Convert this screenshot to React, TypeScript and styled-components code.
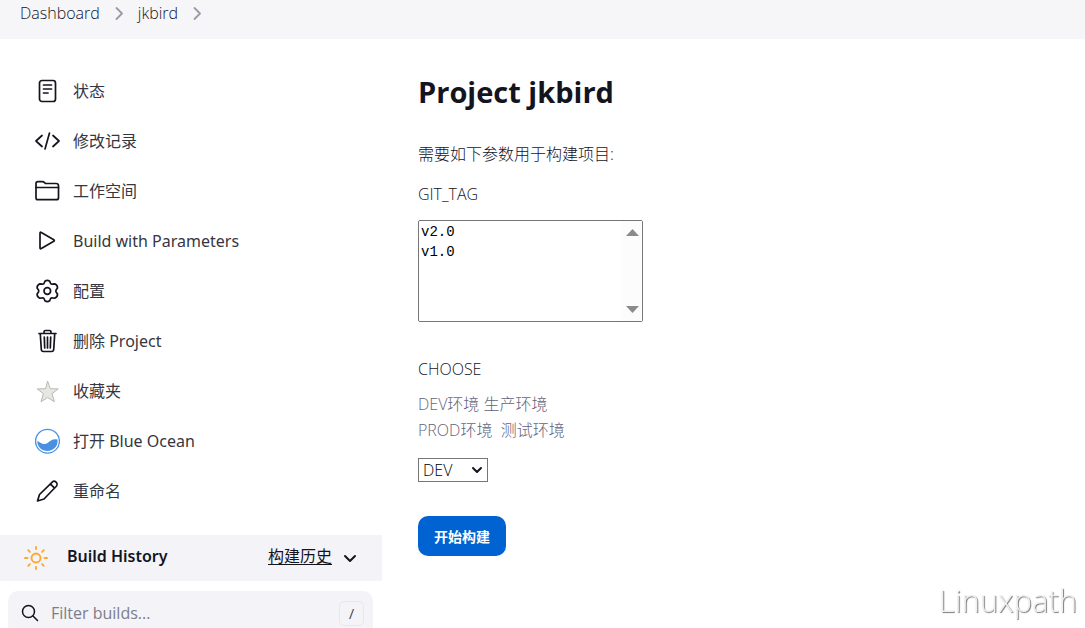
import React from 'react';
import styled, { createGlobalStyle } from 'styled-components';

const latin = '"Open Sans", "Noto Sans CJK SC", sans-serif';
const wideLatin = '"Noto Sans", "Noto Sans CJK SC", sans-serif';

const GlobalStyle = createGlobalStyle`
  *, *::before, *::after { box-sizing: border-box; }
  body {
    margin: 0;
    background: #fff;
    color: #14141f;
    font-family: ${latin};
    font-size: 16px;
    font-weight: 300;
    line-height: 26px;
  }
`;

const Breadcrumbs = styled.nav`
  display: flex;
  align-items: center;
  gap: 11px;
  height: 39px;
  padding: 0 20px 13px;
  background: #f6f6f9;

  a { color: #14141f; text-decoration: none; }
`;

const Columns = styled.div`
  display: flex;
  align-items: flex-start;
`;

const Sidebar = styled.aside`
  flex: 0 0 382px;
  padding-top: 27px;
`;

const Tasks = styled.ul`
  list-style: none;
  margin: 0;
  padding: 0;
`;

const TaskLink = styled.a`
  display: flex;
  align-items: center;
  gap: 13px;
  height: 50px;
  padding-left: 34px;
  color: inherit;
  font-family: ${wideLatin};
  font-weight: 400;
  text-decoration: none;
`;

const TaskLabel = styled.span`
  color: #363641;
`;

const Icon = styled.svg<{ $tone?: string }>`
  display: block;
  flex: none;
  fill: none;
  stroke: ${({ $tone }) => $tone ?? 'currentColor'};
  stroke-linecap: round;
  stroke-linejoin: round;
`;

const HistoryBar = styled.header`
  display: flex;
  align-items: center;
  height: 46px;
  margin-top: 19px;
  padding: 0 24px;
  background: #f3f3f8;
`;

const HistoryTitle = styled.h2`
  flex: 1;
  margin: 0 0 0 19px;
  padding-bottom: 4px;
  font-family: ${wideLatin};
  font-size: 16px;
  font-weight: 600;
  line-height: 26px;
`;

const TrendLink = styled.a`
  margin-right: 10px;
  padding-bottom: 4px;
  color: inherit;
  font-weight: 400;
  text-underline-offset: 2px;
`;

const FilterBox = styled.label`
  display: flex;
  align-items: center;
  gap: 12px;
  height: 44px;
  margin: 10px 9px 0 8px;
  padding: 0 9px 0 13px;
  border-radius: 10px;
  background: #f3f3f8;
`;

const FilterInput = styled.input`
  flex: 1;
  min-width: 0;
  padding: 0;
  border: 0;
  outline: 0;
  background: transparent;
  color: inherit;
  font: inherit;
  font-weight: 400;

  &::placeholder { color: #7d7d8a; opacity: 1; }
`;

const Shortcut = styled.kbd`
  width: 25px;
  height: 25px;
  border: 1px solid #e7e7ee;
  border-radius: 5px;
  color: #40404b;
  font-family: inherit;
  font-size: 14px;
  font-weight: 400;
  line-height: 24px;
  text-align: center;
`;

const Main = styled.main`
  flex: 1;
  min-width: 0;
  padding: 33px 36px 40px;
`;

const Title = styled.h1`
  margin: 0 0 29px;
  font-size: 29px;
  font-weight: 700;
  line-height: 40px;
`;

const Intro = styled.p`
  margin: 0 0 14px;
`;

const FieldLabel = styled.label`
  display: block;
  margin-bottom: 13px;
`;

const ListFrame = styled.div`
  display: flex;
  width: 225px;
  height: 102px;
  margin-bottom: 34px;
  border: 1px solid #767676;
  border-radius: 2px;
`;

const TagList = styled.select`
  flex: 1;
  min-width: 0;
  padding: 1px 0 0;
  border: 0;
  outline: 0;
  background: #fff;
  color: #000;
  font-family: "Liberation Mono", monospace;
  font-size: 14px;
  overflow: hidden;

  option {
    height: 20px;
    min-height: 20px;
    padding: 2px;
    line-height: 16px;
  }
`;

const ScrollTrack = styled.div`
  display: flex;
  flex-direction: column;
  justify-content: space-between;
  align-items: center;
  width: 20px;
  padding: 8px 0;
  background: #fcfcfc;
`;

const Description = styled.div`
  margin: -4px 0 15px;
  color: #63637a;
  white-space: pre-wrap;
`;

const ChoiceFrame = styled.div`
  display: grid;
  align-items: center;
  width: 70px;
  height: 24px;
  margin-bottom: 34px;
  border: 1px solid #767676;

  > * { grid-area: 1 / 1; }
  > svg { justify-self: end; margin-right: 4px; pointer-events: none; }
`;

const ChoiceSelect = styled.select`
  appearance: none;
  width: 100%;
  height: 22px;
  padding: 0 4px;
  border: 0;
  background: transparent;
  color: #000;
  font: inherit;
  line-height: 22px;
`;

const SubmitButton = styled.button`
  display: block;
  width: 88px;
  height: 40px;
  padding: 0;
  border: 0;
  border-radius: 10px;
  background: #0063d1;
  color: #fff;
  font-family: inherit;
  font-size: 14px;
  font-weight: 700;
`;

const Watermark = styled.div`
  position: fixed;
  right: 8px;
  bottom: 8px;
  color: #f0f0f0;
  font-size: 31px;
  line-height: 40px;
  text-shadow: 1px 1px 1px #777;
  pointer-events: none;
`;

const Separator = () => (
  <Icon width="16" height="16" viewBox="0 0 16 16" $tone="#9a9aa6" strokeWidth="1.800">
    <path d="M5.500 3l5.500 5.500-5.500 5.500" />
  </Icon>
);

const TaskIcon = ({ children }: { children: React.ReactNode }) => (
  <Icon width="26" height="26" viewBox="0 0 26 26" strokeWidth="1.7">{children}</Icon>
);

const tasks: { label: string; icon: React.ReactNode }[] = [
  {
    label: '状态',
    icon: <><rect x="5.500" y="2.500" width="16" height="21" rx="2.5" /><path d="M9.500 7h8M9.500 11h8M9.500 15h4.5" /></>,
  },
  {
    label: '修改记录',
    icon: <path d="M8 7.5L2 13l6 5.5M19 7.500l6 5.5-6 5.5M15.500 5l-4.500 16" />,
  },
  {
    label: '工作空间',
    icon: <><path d="M2 20v-14.500Q2 3.700 4 3.700h4.500q1 0 2 1l1 .8H22q2.500 0 2.500 2.200v12q0 2-2 2H4q-2 0-2-1.700z" /><path d="M2 9.500h22.500" /></>,
  },
  {
    label: 'Build with Parameters',
    icon: <path d="M6 5.200v14.600q0 1.500 1.300.7l12.500-7.200q1-.8 0-1.600L7.300 4.500q-1.300-.8-1.300.7z" />,
  },
  {
    label: '配置',
    icon: (
      <>
        <circle cx="13.300" cy="13" r="3.300" />
        <path d="M10.900 3.300Q13.300 1.500 15.700 3.300L16.600 5.500Q17.300 6.300 18.500 6.100L20.800 5.800Q23.700 7.200 23.500 10L22.100 12Q21.600 13 22.100 14L23.500 16Q23.700 18.800 20.800 20.200L18.500 19.900Q17.300 19.700 16.600 20.500L15.700 22.700Q13.300 24.500 10.900 22.700L10 20.500Q9.300 19.700 8.100 19.900L5.800 20.200Q2.900 18.800 3.100 16L4.500 14Q5 13 4.500 12L3.100 10Q2.900 7.200 5.800 5.800L8.100 6.100Q9.300 6.300 10 5.500Z" />
      </>
    ),
  },
  {
    label: '删除 Project',
    icon: <path d="M5 5.500h17M10 5.500V4q0-1.500 1.500-1.500h4q1.500 0 1.500 1.500v1.500M6.300 6l1 15.500q.2 2 2 2h8.400q1.800 0 2-2L20.700 6M10.300 9l.4 11M13.500 9V20M16.700 9L16.300 20" />,
  },
  {
    label: '收藏夹',
    icon: <path d="M13.700 3.500l2.600 7.200 8 .2-6.300 4.800 2.400 8-6.700-4.200L7 23.700l2.400-8L3.200 10.900l8-.2z" fill="#e6e6e4" stroke="#b9b9b6" strokeWidth="1" />,
  },
  {
    label: '打开 Blue Ocean',
    icon: (
      <>
        <circle cx="13.500" cy="13.200" r="11.900" stroke="#4a90e2" strokeWidth="1.300" />
        <path d="M3.300 13C7 14.500 8 17 12 15.800 16 14.500 17 10 23.500 11.600 24.300 18.500 19.500 23 13.500 23 8 23 3 19 3.300 13z" fill="#4a90e2" stroke="none" />
      </>
    ),
  },
  {
    label: '重命名',
    icon: <path d="M3.500 23l2-6.500L18.500 3.800q1.500-1.200 3.200 0l.9.900q1.300 1.500 0 3.300L10 21zM16.300 5.800l4.300 4.300" />,
  },
];

export default function App() {
  return (
    <>
      <GlobalStyle />
      <Breadcrumbs aria-label="Breadcrumb">
        <a href="#dashboard">Dashboard</a>
        <Separator />
        <a href="#jkbird">jkbird</a>
        <Separator />
      </Breadcrumbs>
      <Columns>
        <Sidebar>
          <Tasks>
            {tasks.map((task) => (
              <li key={task.label}>
                <TaskLink href="#task">
                  <TaskIcon>{task.icon}</TaskIcon>
                  <TaskLabel>{task.label}</TaskLabel>
                </TaskLink>
              </li>
            ))}
          </Tasks>
          <HistoryBar>
            <Icon width="24" height="24" viewBox="0 0 24 24" $tone="#fea82f" strokeWidth="1.900">
              <circle cx="12" cy="12" r="4.500" />
              <path d="M12 1v2M12 21v2M1 12h2.500M20.500 12H23M4.200 4.200l1.700 1.700M18.100 18.100l1.700 1.700M4.200 19.800l1.700-1.700M18.100 5.900l1.700-1.700" />
            </Icon>
            <HistoryTitle>Build History</HistoryTitle>
            <TrendLink href="#trend">构建历史</TrendLink>
            <Icon width="16" height="16" viewBox="0 0 16 16" strokeWidth="2">
              <path d="M3 6l5 5 5-5" />
            </Icon>
          </HistoryBar>
          <FilterBox>
            <Icon width="18" height="18" viewBox="0 0 18 18" strokeWidth="1.500">
              <circle cx="7.500" cy="7.500" r="6" />
              <path d="M12 12l4.500 4.500" />
            </Icon>
            <FilterInput type="text" placeholder="Filter builds..." aria-label="Filter builds" />
            <Shortcut>/</Shortcut>
          </FilterBox>
        </Sidebar>
        <Main>
          <Title>Project jkbird</Title>
          <Intro>需要如下参数用于构建项目:</Intro>
          <FieldLabel htmlFor="git-tag">GIT_TAG</FieldLabel>
          <ListFrame>
            <TagList id="git-tag" size={5}>
              <option>v2.0</option>
              <option>v1.0</option>
            </TagList>
            <ScrollTrack aria-hidden="true">
              <svg width="13" height="7" viewBox="0 0 13 7"><path d="M6.500 0L13 7H0z" fill="#8b8b8b" /></svg>
              <svg width="13" height="7" viewBox="0 0 13 7"><path d="M6.500 7L13 0H0z" fill="#8b8b8b" /></svg>
            </ScrollTrack>
          </ListFrame>
          <FieldLabel htmlFor="choose">CHOOSE</FieldLabel>
          <Description>{'DEV环境 生产环境\nPROD环境  测试环境'}</Description>
          <ChoiceFrame>
            <ChoiceSelect id="choose" defaultValue="DEV">
              <option>DEV</option>
              <option>PROD</option>
            </ChoiceSelect>
            <Icon width="12" height="12" viewBox="0 0 12 12" strokeWidth="2">
              <path d="M2 4l4 4 4-4" />
            </Icon>
          </ChoiceFrame>
          <SubmitButton type="button">开始构建</SubmitButton>
        </Main>
      </Columns>
      <Watermark>Linuxpath</Watermark>
    </>
  );
}
